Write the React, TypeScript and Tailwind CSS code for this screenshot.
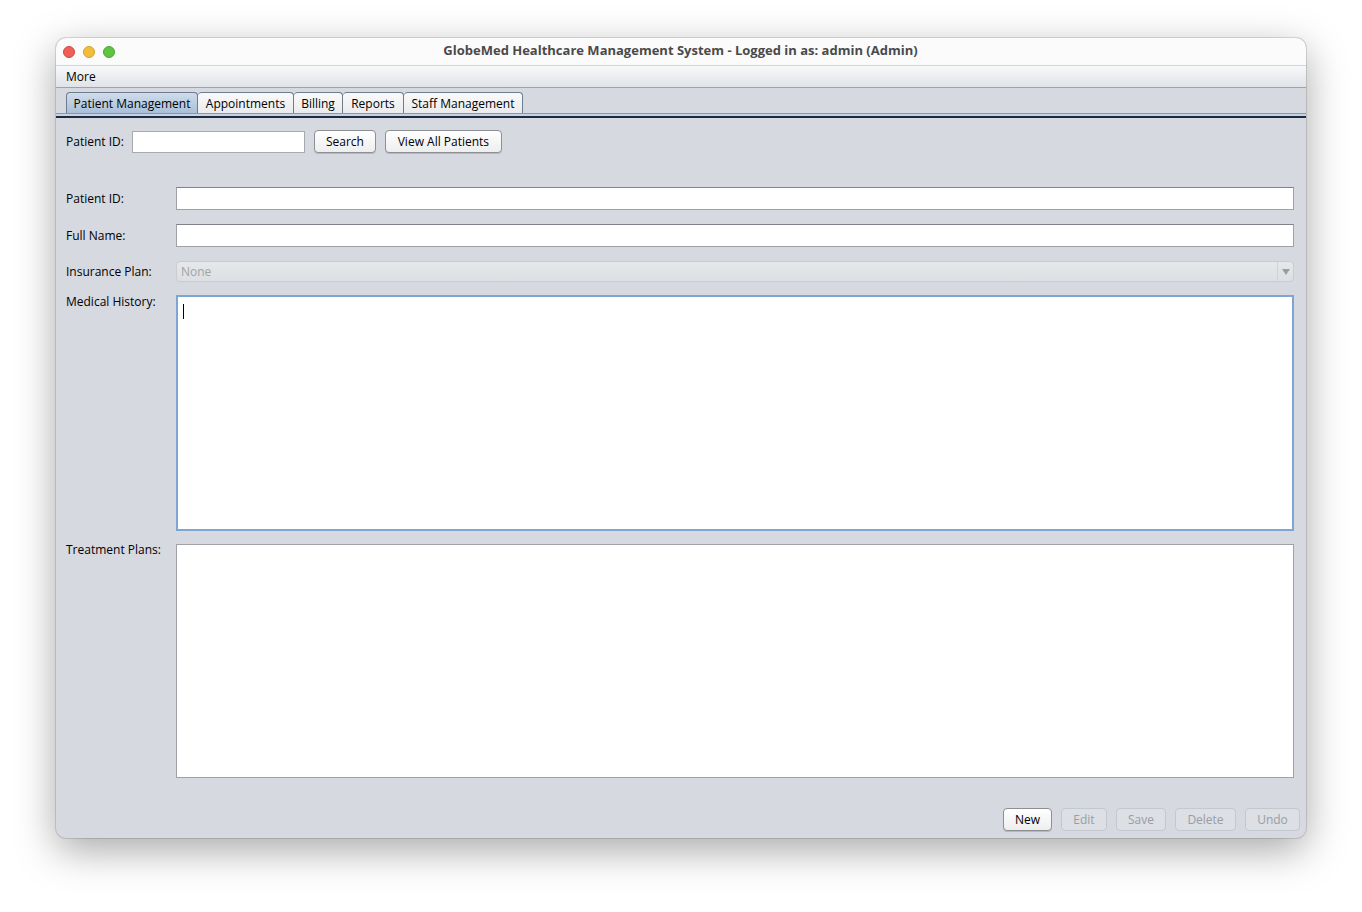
import React from 'react';

const font = { fontFamily: '"Open Sans", "DejaVu Sans", sans-serif' };

const tabs = [
    { label: 'Patient Management', w: 'w-[132px]' },
    { label: 'Appointments', w: 'w-[96px]' },
    { label: 'Billing', w: 'w-[49px]' },
    { label: 'Reports', w: 'w-[61px]' },
    { label: 'Staff Management', w: 'w-[119px]' },
];

function TitleBar() {
    return (
        <div className="relative flex h-[28px] items-center rounded-t-[10px] border-b border-[#d4d4d4] bg-[#fbfbfb]">
            <div className="flex gap-[8px] pl-[7px]">
                <span className="h-[12px] w-[12px] rounded-full border border-[#d1483f] bg-[#ee5f57]" />
                <span className="h-[12px] w-[12px] rounded-full border border-[#d4a12a] bg-[#f2bd3c]" />
                <span className="h-[12px] w-[12px] rounded-full border border-[#4ea532] bg-[#5fc43f]" />
            </div>
            <div className="flex-1 pb-[1px] pr-[60px] text-center text-[13px] font-bold text-[#4a4a4a]">
                GlobeMed Healthcare Management System - Logged in as: admin (Admin)
            </div>
        </div>
    );
}

function Tabs() {
    return (
        <div className="px-[10px] pt-[4px]">
            <div className="flex h-[21px] items-end">
                {tabs.map((t, i) => (
                    <div
                        key={t.label}
                        className={
                            i === 0
                                ? `flex h-[21px] ${t.w} items-center justify-center rounded-t-[4px] border border-b-0 border-[#6f7c8c] bg-gradient-to-b from-[#cfdceb] to-[#a9c0d8] pt-[2px] text-[12px] text-black`
                                : `flex h-[21px] ${t.w} items-center justify-center rounded-t-[4px] border border-b-0 border-l-0 border-[#6f7c8c] bg-gradient-to-b from-[#fafafa] to-[#eaebee] pt-[2px] text-[12px] text-black`
                        }
                    >
                        {t.label}
                    </div>
                ))}
            </div>
            <div className="-mx-[10px] h-[5px] border-t border-b-2 border-t-[#8a98a8] border-b-[#1e2a44] bg-[#c6d3e2]" />
        </div>
    );
}

function Field({ label, children }: { label: string; children: React.ReactNode }) {
    return (
        <div className="flex items-center">
            <div className="w-[110px] text-[12px] text-black">{label}</div>
            <div className="flex-1">{children}</div>
        </div>
    );
}

function Button({ label, disabled = false, w }: { label: string; disabled?: boolean; w: string }) {
    return (
        <div
            className={
                disabled
                    ? `flex h-[23px] ${w} items-center justify-center rounded-[4px] border border-[#c4c7cd] bg-[#dcdfe4] text-[12px] text-[#9a9da3]`
                    : `flex h-[23px] ${w} items-center justify-center rounded-[4px] border border-[#8c8f94] bg-gradient-to-b from-white to-[#eeeeee] text-[12px] text-black shadow-[0_1px_0_rgba(0,0,0,0.15)]`
            }
        >
            {label}
        </div>
    );
}

export default function App() {
    return (
        <div className="min-h-[912px] bg-white pl-[56px] pt-[38px]" style={font}>
            <div className="flex h-[800px] w-[1250px] flex-col overflow-hidden rounded-[10px] bg-[#d6d9e0] shadow-[0_12px_40px_rgba(0,0,0,0.35),0_0_0_1px_rgba(0,0,0,0.12)]">
                <TitleBar />
                <div className="flex h-[22px] items-center border-b border-[#9ea3ab] bg-gradient-to-b from-[#f7f8f9] to-[#e0e3e8] pl-[10px] text-[12px] text-black">
                    More
                </div>
                <Tabs />

                <div className="flex flex-1 flex-col px-[10px]">
                    <div className="mt-[12px] flex items-center">
                        <span className="mr-[8px] text-[12px]">Patient ID:</span>
                        <div className="h-[22px] w-[173px] border border-[#a6a9ae] bg-white" />
                        <div className="ml-[9px]">
                            <Button label="Search" w="w-[62px]" />
                        </div>
                        <div className="ml-[9px]">
                            <Button label="View All Patients" w="w-[117px]" />
                        </div>
                    </div>

                    <div className="mt-[34px] flex flex-col gap-[14px] pr-[2px]">
                        <Field label="Patient ID:">
                            <div className="h-[23px] border border-[#9ea1a6] border-t-[#7f8288] bg-white" />
                        </Field>
                        <Field label="Full Name:">
                            <div className="h-[23px] border border-[#9ea1a6] border-t-[#7f8288] bg-white" />
                        </Field>
                        <Field label="Insurance Plan:">
                            <div className="flex h-[21px] items-center rounded-[4px] border border-[#c9ccd1] bg-gradient-to-b from-[#e6e8eb] to-[#dcdfe3] pl-[4px] text-[12px] text-[#a0a3a8]">
                                <span className="flex-1">None</span>
                                <div className="flex h-full w-[16px] items-center justify-center border-l border-[#cfd2d6]">
                                    <svg width="8" height="6" viewBox="0 0 8 6">
                                        <path d="M0 0 L8 0 L4 6 Z" fill="#9a9da2" />
                                    </svg>
                                </div>
                            </div>
                        </Field>
                    </div>

                    <div className="mt-[13px] flex items-start pr-[2px]">
                        <div className="w-[110px] text-[12px] leading-[14px]">Medical History:</div>
                        <div className="h-[236px] flex-1 border-2 border-[#7fa6d3] bg-white pl-[5px] pt-[7px]">
                            <div className="h-[15px] w-px bg-black" />
                        </div>
                    </div>

                    <div className="mt-[13px] flex items-start pr-[2px]">
                        <div className="w-[110px] text-[12px] leading-[12px]">Treatment Plans:</div>
                        <div className="h-[234px] flex-1 border border-[#9ea1a6] bg-white" />
                    </div>

                    <div className="-mr-[4px] mb-[7px] mt-auto flex justify-end gap-[9px]">
                        <Button label="New" w="w-[49px]" />
                        <Button label="Edit" disabled w="w-[46px]" />
                        <Button label="Save" disabled w="w-[50px]" />
                        <Button label="Delete" disabled w="w-[61px]" />
                        <Button label="Undo" disabled w="w-[55px]" />
                    </div>
                </div>
            </div>
        </div>
    );
}
